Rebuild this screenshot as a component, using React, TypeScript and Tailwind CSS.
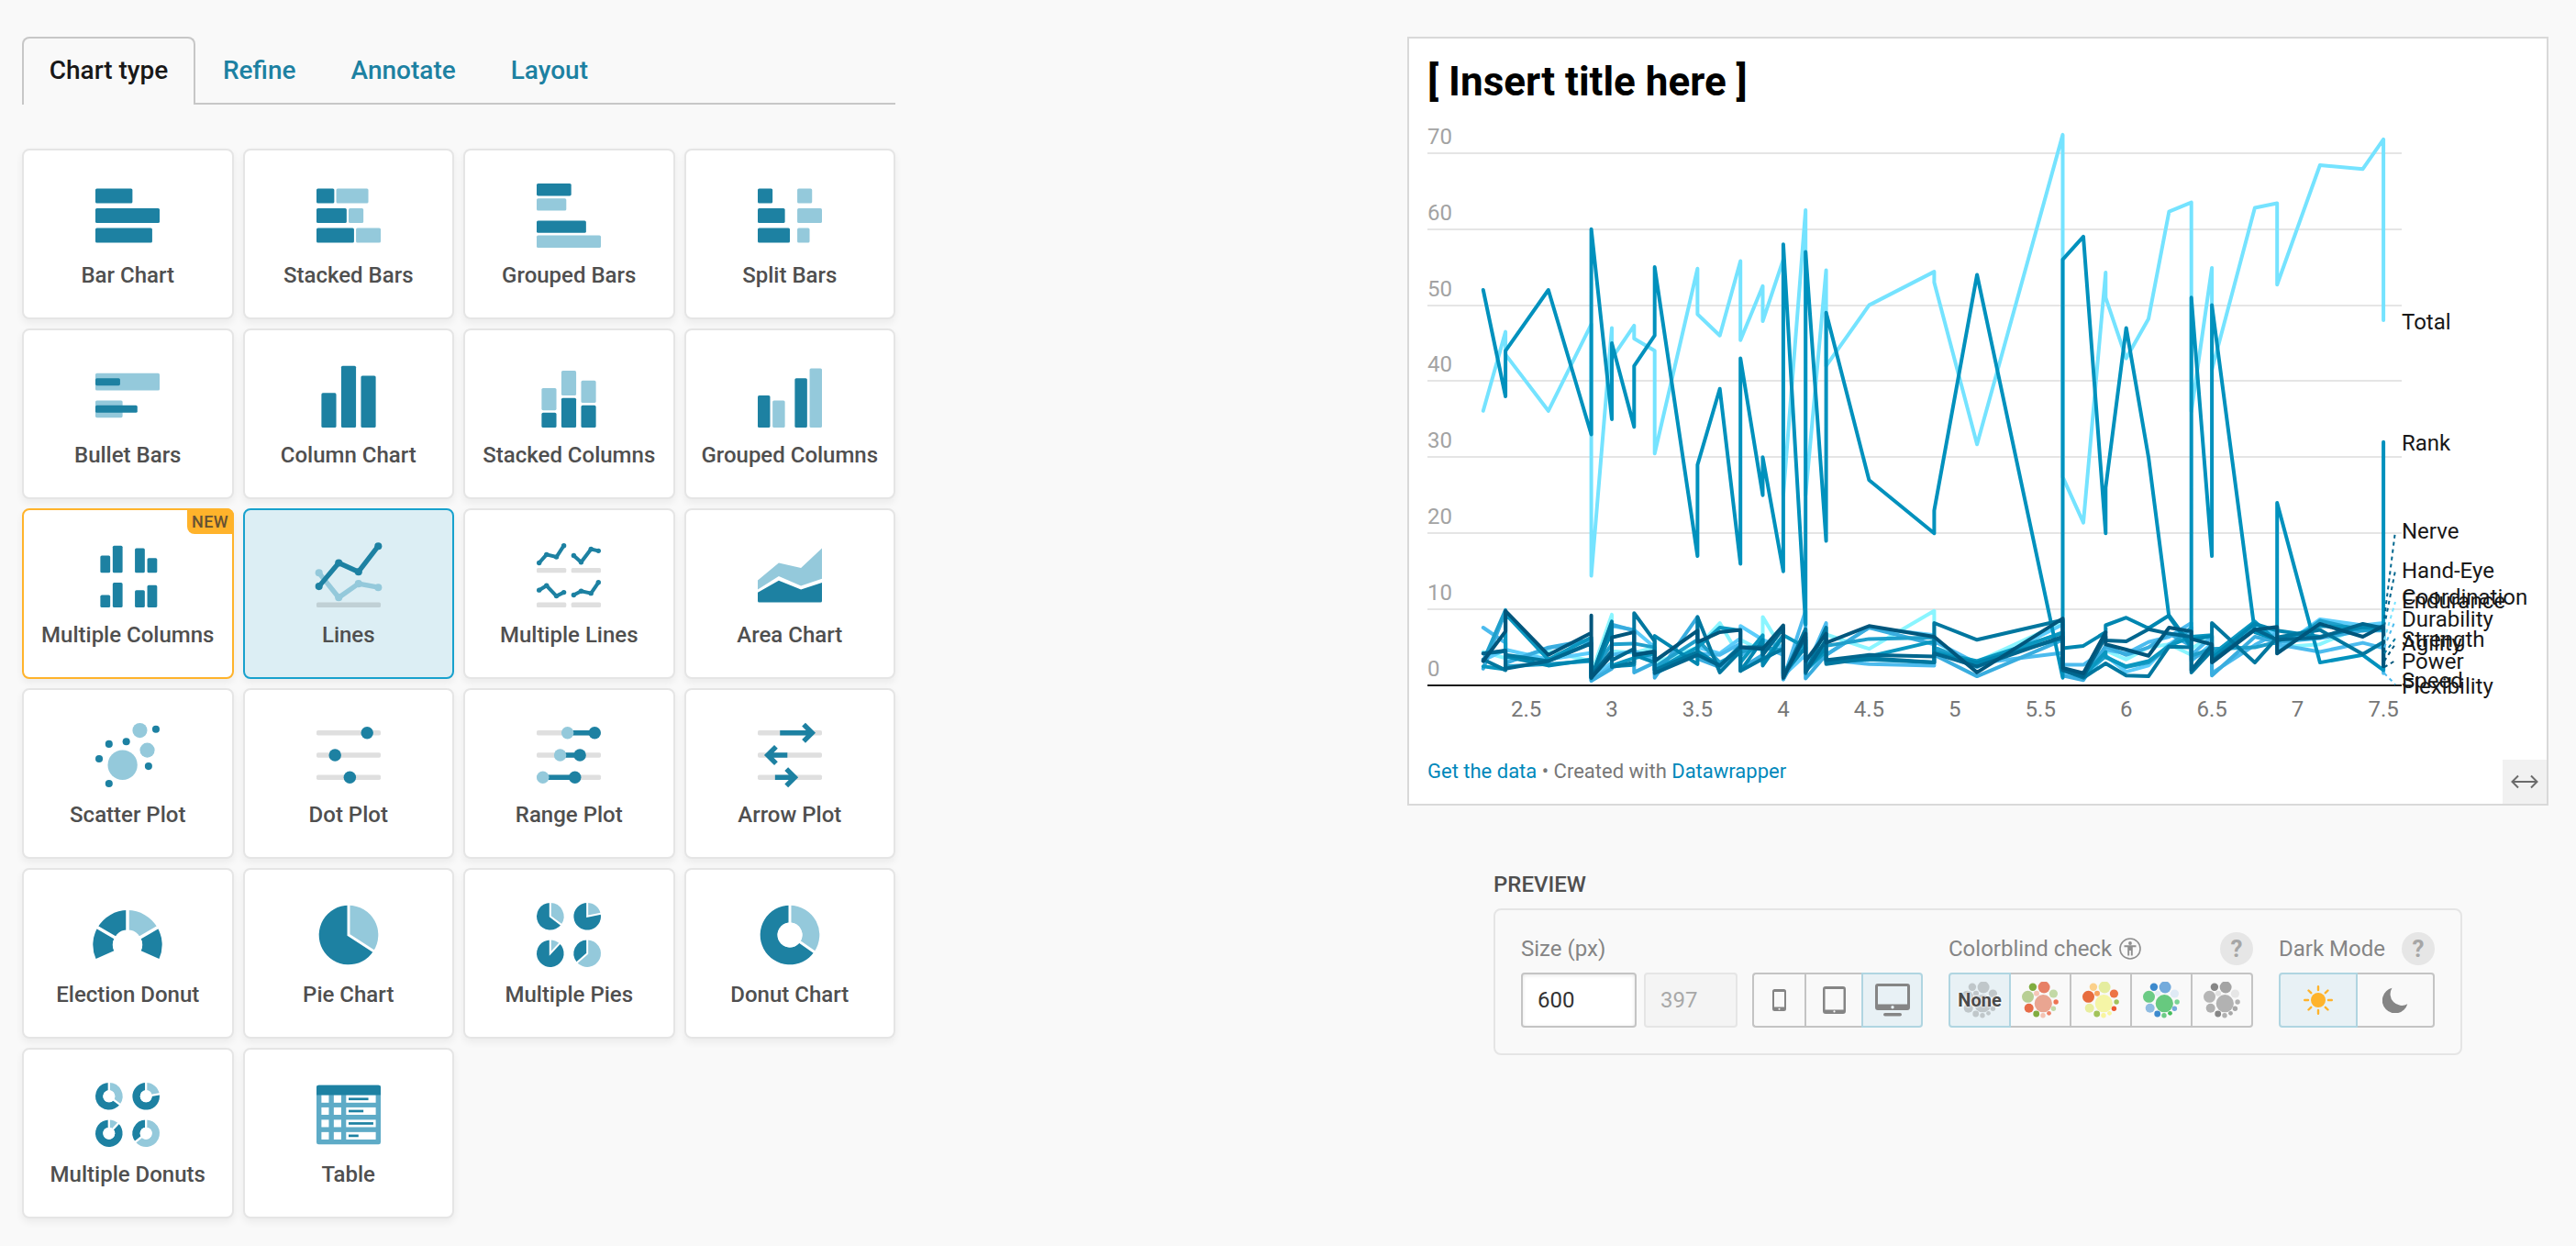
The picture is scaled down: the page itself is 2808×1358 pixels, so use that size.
import React from "react";

const D = "#1d81a2";
const L = "#94c9db";
const G = "rgba(0,0,0,0.125)";

type Bar = [number, number, number, number, string];

const Bars = ({ items }: { items: Bar[] }) => (
  <>
    {items.map(([x, y, w, h, fill], i) => (
      <rect key={i} x={x} y={y} width={w} height={h} rx={0.6} fill={fill} />
    ))}
  </>
);

const polar = (cx: number, cy: number, r: number, deg: number) => {
  const a = ((deg - 90) * Math.PI) / 180;
  return [cx + r * Math.cos(a), cy + r * Math.sin(a)];
};

const slicePath = (cx: number, cy: number, r: number, inner: number, a0: number, a1: number) => {
  const large = a1 - a0 > 180 ? 1 : 0;
  const [x0, y0] = polar(cx, cy, r, a0);
  const [x1, y1] = polar(cx, cy, r, a1);
  const [x2, y2] = polar(cx, cy, inner, a1);
  const [x3, y3] = polar(cx, cy, inner, a0);
  return `M${x0} ${y0}A${r} ${r} 0 ${large} 1 ${x1} ${y1}L${x2} ${y2}A${inner} ${inner} 0 ${large} 0 ${x3} ${y3}Z`;
};

interface PieProps {
  cx: number;
  cy: number;
  r: number;
  inner?: number;
  split: number;
  gap?: number;
}

const Pie = ({ cx, cy, r, inner = 0.01, split, gap = 1.1 }: PieProps) => {
  const [sx, sy] = polar(cx, cy, r + 1, split);
  return (
    <g>
      <path d={slicePath(cx, cy, r, inner, 0, split)} fill={L} />
      <path d={slicePath(cx, cy, r, inner, split, 360)} fill={D} />
      <path d={`M${cx} ${cy - r - 1}V${cy}L${sx} ${sy}`} fill="none" stroke="#fff" strokeWidth={gap} />
      {inner > 1 && <circle cx={cx} cy={cy} r={inner} fill="#fff" />}
    </g>
  );
};

const Spark = ({ pts, color, w, r }: { pts: number[][]; color: string; w: number; r: number }) => (
  <g>
    <polyline points={pts.map((p) => p.join(",")).join(" ")} fill="none" stroke={color} strokeWidth={w} strokeLinejoin="round" />
    {pts.map(([x, y], i) => (
      <circle key={i} cx={x} cy={y} r={r} fill={color} />
    ))}
  </g>
);

const Dots = ({ items }: { items: [number, number, number, string][] }) => (
  <>
    {items.map(([x, y, r, fill], i) => (
      <circle key={i} cx={x} cy={y} r={r} fill={fill} />
    ))}
  </>
);

const tracks: Bar[] = [
  [0, 3, 26, 2, G],
  [0, 12, 26, 2, G],
  [0, 21, 26, 2, G],
];

const chartTypes: { name: string; icon: React.ReactNode; state?: "new" | "active" }[] = [
  { name: "Bar Chart", icon: <Bars items={[[0, 2, 15, 6, D], [0, 10, 26, 6, D], [0, 18, 23, 6, D]]} /> },
  {
    name: "Stacked Bars",
    icon: (
      <Bars items={[[0, 2, 7.2, 6, D], [8, 2, 13, 6, L], [0, 10, 12.2, 6, D], [13, 10, 6, 6, L], [0, 18, 15.2, 6, D], [16, 18, 10, 6, L]]} />
    ),
  },
  { name: "Grouped Bars", icon: <Bars items={[[0, 0, 14, 5, D], [0, 6, 12, 5, L], [0, 15, 20, 5, D], [0, 21, 26, 5, L]]} /> },
  {
    name: "Split Bars",
    icon: <Bars items={[[0, 2, 6, 6, D], [16, 2, 6, 6, L], [0, 10, 11, 6, D], [16, 10, 10, 6, L], [0, 18, 13, 6, D], [16, 18, 5, 6, L]]} />,
  },
  { name: "Bullet Bars", icon: <Bars items={[[0, 4, 26, 7, L], [0, 6, 10, 3, D], [0, 15, 11, 7, L], [0, 17, 17, 3, D]]} /> },
  { name: "Column Chart", icon: <Bars items={[[2, 12, 6, 14, D], [10, 1, 6, 25, D], [18, 5, 6, 21, D]]} /> },
  {
    name: "Stacked Columns",
    icon: (
      <Bars items={[[2, 10, 6, 9, L], [2, 20, 6, 6, D], [10, 3, 6, 10, L], [10, 14, 6, 12, D], [18, 7, 6, 9, L], [18, 17, 6, 9, D]]} />
    ),
  },
  { name: "Grouped Columns", icon: <Bars items={[[0, 13, 5, 13, D], [6, 15, 5, 11, L], [15, 6, 5, 20, D], [21, 2, 5, 24, L]]} /> },
  {
    name: "Multiple Columns",
    state: "new",
    icon: (
      <Bars
        items={[
          [2, 5, 4, 7, D], [7, 1, 4, 11, D], [16, 2, 4, 10, D], [21, 6, 4, 6, D],
          [2, 21, 4, 5, D], [7, 16, 4, 10, D], [16, 19, 4, 7, D], [21, 17, 4, 9, D],
        ]}
      />
    ),
  },
  {
    name: "Lines",
    state: "active",
    icon: (
      <>
        <Spark pts={[[1, 12], [9, 22], [17, 16.4], [25, 17.9]]} color={L} w={2} r={1.5} />
        <Spark pts={[[1, 17.5], [9, 8], [17, 11.6], [25, 1.2]]} color={D} w={2} r={1.5} />
        <rect x={0} y={24} width={26} height={2} rx={0.6} fill={G} />
      </>
    ),
  },
  {
    name: "Multiple Lines",
    icon: (
      <>
        <Spark pts={[[1, 8], [4, 4.6], [8, 5.6], [11, 1]]} color={D} w={1.5} r={1} />
        <Spark pts={[[15, 5], [18, 7.7], [22, 2.4], [25, 3.1]]} color={D} w={1.5} r={1} />
        <Spark pts={[[1, 19], [4, 17.2], [8, 21.4], [11, 19.9]]} color={D} w={1.5} r={1} />
        <Spark pts={[[15, 21], [18, 19.4], [22, 20.3], [25, 15.9]]} color={D} w={1.5} r={1} />
        <Bars items={[[0, 10, 12, 2, G], [14, 10, 12, 2, G], [0, 24, 12, 2, G], [14, 24, 12, 2, G]]} />
      </>
    ),
  },
  {
    name: "Area Chart",
    icon: (
      <>
        <path d="M0 15L8.5 8L17.5 10L26 2V14.4L17.5 17.3L8.5 13.4L0 18.8Z" fill={L} />
        <path d="M0 20L8.5 15.1L17.5 18.8L26 16V23.4a.6.6 0 0 1-.6.6H.6a.6.6 0 0 1-.6-.6Z" fill={D} />
      </>
    ),
  },
  {
    name: "Scatter Plot",
    icon: (
      <Dots
        items={[
          [18, 3, 3, L], [21, 11, 3, L], [11, 17, 6, L], [24.5, 2.5, 1.5, D], [12.5, 7.5, 1.5, D],
          [5.5, 8.5, 1.5, D], [1.5, 14.5, 1.5, D], [21.5, 17.5, 1.5, D], [5.5, 24.5, 1.5, D],
        ]}
      />
    ),
  },
  {
    name: "Dot Plot",
    icon: (
      <>
        <Bars items={tracks} />
        <Dots items={[[20.5, 4, 2.5, D], [7.5, 13, 2.5, D], [13.5, 22, 2.5, D]]} />
      </>
    ),
  },
  {
    name: "Range Plot",
    icon: (
      <>
        <Bars items={tracks} />
        <Bars items={[[12.5, 3, 11, 2, D], [9.5, 12, 8, 2, D], [2.5, 21, 13, 2, D]]} />
        <Dots items={[[12.5, 4, 2.5, L], [23.5, 4, 2.5, D], [9.5, 13, 2.5, L], [17.5, 13, 2.5, D], [2.5, 22, 2.5, L], [15.5, 22, 2.5, D]]} />
      </>
    ),
  },
  {
    name: "Arrow Plot",
    icon: (
      <>
        <Bars items={tracks} />
        <path
          d="M9 4H22M18.6 .6L22 4L18.6 7.4M12 13H4.2M7.4 9.6L4 13L7.4 16.4M7 22H15M11.6 18.6L15 22L11.6 25.4"
          fill="none"
          stroke={D}
          strokeWidth={2}
        />
      </>
    ),
  },
  {
    name: "Election Donut",
    icon: (
      <>
        <path d={slicePath(13, 17, 14, 6, -114, -60)} fill={D} />
        <path d={slicePath(13, 17, 14, 6, -60, 0)} fill={D} />
        <path d={slicePath(13, 17, 14, 6, 0, 60)} fill={L} />
        <path d={slicePath(13, 17, 14, 6, 60, 114)} fill={D} />
        <path d="M13 2V13M13 17L.2 9.6M13 17L25.8 9.6" stroke="#fff" strokeWidth={1.3} />
        <circle cx={13} cy={17} r={5.9} fill="#fff" />
      </>
    ),
  },
  { name: "Pie Chart", icon: <Pie cx={13} cy={13} r={12} split={123} /> },
  {
    name: "Multiple Pies",
    icon: (
      <>
        <Pie cx={5.5} cy={5.5} r={5.5} split={127} gap={0.75} />
        <Pie cx={20.5} cy={5.5} r={5.5} split={78} gap={0.75} />
        <Pie cx={5.5} cy={20.5} r={5.5} split={43} gap={0.75} />
        <Pie cx={20.5} cy={20.5} r={5.5} split={229} gap={0.75} />
      </>
    ),
  },
  { name: "Donut Chart", icon: <Pie cx={13} cy={13} r={12} inner={5} split={125} /> },
  {
    name: "Multiple Donuts",
    icon: (
      <>
        <Pie cx={5.5} cy={5.5} r={5.5} inner={2.4} split={127} gap={0.85} />
        <Pie cx={20.5} cy={5.5} r={5.5} inner={2.4} split={80} gap={0.85} />
        <Pie cx={5.5} cy={20.5} r={5.5} inner={2.4} split={43} gap={0.85} />
        <Pie cx={20.5} cy={20.5} r={5.5} inner={2.4} split={231} gap={0.85} />
      </>
    ),
  },
  {
    name: "Table",
    icon: (
      <>
        <rect x={0} y={1} width={26} height={24} rx={0.9} fill="#5eabc7" />
        <path d="M0 5V1.9A.9.9 0 0 1 .9 1H25.1a.9.9 0 0 1 .9.9V5Z" fill={D} />
        {[5.1, 10, 15, 20].map((y, i) => (
          <g key={y}>
            <rect x={2} y={y} width={3} height={3} fill="#fff" />
            <rect x={7} y={y} width={3} height={3} fill="#fff" />
            <rect x={12} y={y} width={12} height={3} fill="#fff" />
            <rect x={13} y={y + 1} width={[8, 6, 10, 4][i]} height={1} fill={D} />
          </g>
        ))}
      </>
    ),
  },
];

const ChartCard = ({ name, icon, state }: { name: string; icon: React.ReactNode; state?: string }) => {
  const look =
    state === "new"
      ? "border-[#ffb32b] bg-white"
      : state === "active"
        ? "border-[#18a1cd] bg-[#dceef4]"
        : "border-[#e5e5e5] bg-white";
  return (
    <div className={`relative flex h-[186px] flex-col items-center rounded-lg border-2 pt-9 shadow-[0_4px_8px_rgba(0,0,0,0.06)] ${look}`}>
      {state === "new" && (
        <span className="absolute -top-0.5 -right-0.5 flex h-7 w-[51px] items-center justify-center rounded-tr-lg rounded-bl-lg bg-[#ffb32b] text-[18px] font-medium tracking-[0.4px] text-[#665133]">
          NEW
        </span>
      )}
      <svg className="size-[70px] shrink-0 overflow-visible" viewBox="0 0 26 26">
        {icon}
      </svg>
      <span className="mt-[15px] text-2xl leading-[30px] font-medium whitespace-nowrap text-[#4f4f4f]">{name}</span>
    </div>
  );
};

/* ---------- line chart ---------- */

const px = (v: number) => 201 + (v - 3) * 186.9;
const py = (v: number) => 622 - v * 8.289;
const toPoints = (s: string) =>
  s
    .trim()
    .split(/\s*,\s*/)
    .map((p) => {
      const [x, y] = p.split(" ").map(Number);
      return `${px(x).toFixed(1)},${py(y).toFixed(1)}`;
    })
    .join(" ");

const series: { color: string; data: string }[] = [
  {
    color: "#8af5ff",
    data: "2.25 4.4,2.38 3.6,2.63 4.5,2.88 3.2,2.88 1.5,3 9.3,3 4.5,3.13 4.3,3.25 5,3.25 3,3.5 5,3.63 8.2,3.75 3.6,3.75 6,3.88 4.5,3.88 9,4 4.5,4 1.2,4.13 7,4.13 2.5,4.25 6.7,4.5 4.8,4.88 9.8,4.88 5,5.13 3.1,5.63 8.3,5.63 1.2,5.75 1.3,5.88 4.6,6 3.4,6.13 5,6.25 5.4,6.38 4,6.38 4.8,6.5 6.6,6.5 4,6.75 7.8,6.88 6.6,6.88 5,7.13 5.4,7.38 7.8,7.5 7.5,7.5 5",
  },
  {
    color: "#5ccdfb",
    data: "2.25 3.3,2.38 4.7,2.63 3.4,2.88 4.3,2.88 1,3 3,3 7.8,3.13 7.3,3.25 5,3.25 1.4,3.5 5,3.63 4.2,3.75 6.2,3.75 7.8,3.88 6,4 5,4 1.3,4.13 4,4.13 2,4.25 4,4.5 7.6,4.88 6.6,4.88 4.5,5.13 2.4,5.63 8,5.63 1.6,5.75 1,5.88 3.9,6 1.8,6.13 2.6,6.25 5.4,6.38 7.2,6.38 3.2,6.5 5.5,6.5 3,6.75 7.5,6.88 6.9,6.88 4.6,7.13 8.7,7.38 7.9,7.5 8.2,7.5 3.4",
  },
  {
    color: "#4cbbee",
    data: "2.25 7.6,2.38 5.6,2.38 3,2.63 4.9,2.88 5.8,2.88 .6,3 2.6,3 4,3.13 4.5,3.25 3.4,3.25 2,3.5 4.2,3.63 4,3.75 5.5,3.75 4,3.88 5.2,4 4,4 .8,4.13 9.8,4.13 2,4.25 8.2,4.25 3.4,4.5 2.8,4.88 2.6,4.88 5.8,5.13 2.9,5.63 4.3,5.63 2.7,5.75 2.7,5.88 4.7,6 4.2,6.13 5.7,6.25 6.4,6.38 8.2,6.38 4,6.5 6.4,6.5 1.6,6.75 5.3,6.88 6.9,6.88 5.4,7.13 4.4,7.38 5.6,7.5 4.9,7.5 1.6",
  },
  {
    color: "#39addf",
    data: "2.25 2.2,2.38 9.7,2.38 2.9,2.63 5,2.88 6,2.88 .6,3 2.2,3 8,3.13 7.2,3.13 1.7,3.25 3,3.25 1,3.5 9,3.5 3.5,3.63 2.4,3.75 5,3.75 2.2,3.88 4,3.88 3.3,4 5,4 .8,4.13 6,4.13 .9,4.25 4,4.5 7.6,4.88 5.4,4.88 4,5.13 1.2,5.63 6,5.63 1.3,5.75 .7,5.88 5.2,6 4,6.13 5,6.25 6.8,6.38 5.2,6.38 3.4,6.5 5,6.5 1.3,6.75 6.4,6.88 5.7,7.13 6.2,7.38 7.2,7.5 7.2",
  },
  {
    color: "#1f9fcb",
    data: "2.25 3.2,2.38 9.9,2.38 2.5,2.63 2.8,2.88 3.2,2.88 1.6,3 5.4,3.13 5.5,3.25 5,3.25 2.4,3.5 6,3.63 3,3.75 4.4,3.88 5,4 4.6,4 1.6,4.13 6,4.13 2.4,4.25 5.2,4.5 6.1,4.88 6.3,4.88 5,5.13 2.7,5.63 7,5.63 2,5.75 1.6,5.88 3.8,6 2.4,6.13 3,6.25 5.1,6.38 7.6,6.38 3.9,6.5 4.8,6.75 5,6.88 5.7,6.88 4.2,7.13 8.5,7.38 7.2,7.5 7.8",
  },
  {
    color: "#0a97c0",
    data: "2.25 2.5,2.38 2.1,2.38 9.4,2.63 3.4,2.88 6.3,2.88 .9,3 8.2,3 2.6,3.13 3.6,3.25 4.2,3.25 2,3.5 5,3.63 7.6,3.75 7.2,3.75 3,3.88 6.6,3.88 3,4 6.6,4.13 5,4.13 7,4.13 2,4.25 4.5,4.25 3.2,4.5 3.8,4.88 5.8,4.88 4.4,5.13 3.2,5.63 6.9,5.63 2.2,5.75 1.2,5.88 4.4,5.88 3.7,6 2.5,6.13 3.2,6.25 5.2,6.38 6.4,6.5 6.6,6.5 4,6.75 8.4,6.88 5.8,7.13 7.8,7.38 7.6,7.5 7.3",
  },
  {
    color: "#75e3ff",
    data: "2.25 36.1,2.38 46.5,2.38 43.5,2.63 36.1,2.88 47.5,2.88 14.4,3 47,3 43,3.13 47.3,3.13 45.6,3.25 44,3.25 30.5,3.5 54.8,3.5 48.8,3.63 46,3.75 55.8,3.75 45.4,3.88 52.5,3.88 47.9,4 56,4 25,4.13 62.5,4.13 25,4.25 54.6,4.25 42,4.5 50,4.88 54.4,4.88 53,5.13 31.7,5.63 72.4,5.63 27.4,5.75 21.4,5.88 54.3,5.88 51,6 43,6.13 48.2,6.25 62.3,6.38 63.5,6.38 36,6.5 54.9,6.5 41.5,6.75 62.8,6.88 63.4,6.88 52.7,7.13 68.4,7.38 67.9,7.5 71.8,7.5 48",
  },
  {
    color: "#0091bd",
    data: "2.25 52,2.38 38,2.38 44,2.63 52,2.88 33,2.88 60,3 35,3 45,3.13 34,3.13 42,3.25 46,3.25 55,3.5 17,3.5 29,3.63 39,3.75 16,3.75 43,3.88 25,3.88 30,4 15,4 58,4.13 8,4.13 57,4.25 19,4.25 49,4.5 27,4.88 20,4.88 23,5.13 54,5.63 1,5.63 56,5.75 59,5.88 20,5.88 26,6 47,6.13 30,6.25 9,6.38 5,6.38 51,6.5 17,6.5 50,6.75 7,6.88 6,6.88 24,7.13 3,7.38 4,7.5 2,7.5 32",
  },
  {
    color: "#0086b0",
    data: "2.25 4.2,2.38 4.5,2.38 3.8,2.63 2.6,2.88 3.4,2.88 1,3 7,3 2.5,3.13 2.7,3.13 4,3.25 3,3.25 6.5,3.5 2.8,3.5 4.5,3.63 2.6,3.75 5.2,3.75 1.9,3.88 6,3.88 2.6,4 6.5,4 1.5,4.13 5,4.13 2,4.25 5,4.25 3,4.5 3.4,4.88 3,4.88 4.2,5.13 3,5.63 6.2,5.63 4.9,5.75 5.2,5.88 7,5.88 7.9,6 8.9,6.13 7.5,6.25 9.2,6.38 5.2,6.38 6,6.5 6.5,6.5 3.6,6.75 8.1,6.88 7.2,7.13 6.4,7.38 7.7,7.5 7.6",
  },
  {
    color: "#00779f",
    data: "2.25 3.4,2.38 2,2.38 4,2.63 3.2,2.88 5.6,2.88 1,3 8.4,3 2.4,3.13 3,3.13 9.5,3.25 5.8,3.25 2,3.5 4.4,3.5 9,3.63 1.7,3.75 4.5,3.75 1.9,3.88 3.5,4 4.8,4 1,4.13 7.4,4.13 1.6,4.25 7.6,4.25 2.8,4.5 3.6,4.88 3,4.88 8.2,5.13 6,5.63 8.6,5.63 2,5.75 1,5.88 2.9,6 1.3,6.13 1.2,6.25 5.1,6.38 5,6.38 1.7,6.5 4.6,6.5 8.2,6.75 3,6.88 6.3,7.13 7.3,7.38 4.1,7.5 5.7",
  },
  {
    color: "#00668e",
    data: "2.25 4.2,2.38 4.6,2.38 2.2,2.63 3.2,2.88 5.5,2.88 1.2,3 4.5,3 3.3,3.13 4.8,3.13 4,3.25 4.5,3.25 1.6,3.5 4,3.63 2.6,3.75 5,3.88 5,3.88 4,4 7.5,4 1.2,4.13 6.4,4.13 1.8,4.25 6,4.25 3.3,4.5 4,4.88 3.8,4.88 4.2,5.13 2.5,5.63 6.4,5.63 2,5.75 1.2,5.88 6.4,5.88 5.9,6 5.8,6.13 7.4,6.25 6.8,6.38 6.4,6.38 2,6.5 5.3,6.5 3.2,6.75 7.4,6.88 6,7.13 6.3,7.38 8.1,7.5 7.5,7.5 3",
  },
  {
    color: "#00567c",
    data: "2.25 3.2,2.38 7.1,2.38 9.8,2.63 4,2.88 6.9,2.88 9.2,2.88 1,3 4,3 6.3,3.13 7,3.13 4,3.25 4.4,3.25 3.2,3.5 7.2,3.5 5.7,3.63 7,3.75 7.3,3.75 5,3.88 4.8,4 7.9,4 1,4.13 6.8,4.13 3.2,4.25 6.8,4.25 5.6,4.5 7.8,4.88 6.4,5.13 1.7,5.63 8.8,5.63 2.3,5.75 1.6,5.88 7,5.88 5.4,6 4.7,6.13 3.9,6.25 7.6,6.38 7.1,6.38 6.1,6.5 5.4,6.5 3,6.75 7.3,6.88 7.7,6.88 4.2,7.13 8.1,7.38 6.4,7.5 7.8,7.5 2.5",
  },
];

const lineLabels: [string, number][] = [
  ["Total", 358.5],
  ["Rank", 490.5],
  ["Nerve", 586.5],
  ["Hand-Eye", 630],
  ["Coordination", 659],
  ["Endurance", 662.5],
  ["Durability", 682.5],
  ["Strength", 705],
  ["Agility", 708.5],
  ["Power", 728.5],
  ["Speed", 750],
  ["Flexibility", 755.5],
];

const leaders: [number, number, string][] = [
  [8.8, 454, "#00668e"],
  [7.8, 497, "#00668e"],
  [6, 531, "#75e3ff"],
  [5, 551, "#4cbbee"],
  [4.2, 571, "#00779f"],
  [3.2, 577, "#00567c"],
  [2.4, 595, "#00567c"],
  [1.6, 621, "#4cbbee"],
];

const LineChart = () => (
  <svg className="block h-[680px] w-[1220px] shrink-0" viewBox="0 0 1220 680" fontSize="24">
    {[10, 20, 30, 40, 50, 60, 70].map((v) => (
      <line key={v} x1={0} x2={1062} y1={Math.round(py(v))} y2={Math.round(py(v))} stroke="#e5e5e5" strokeWidth={2} />
    ))}
    {[0, 10, 20, 30, 40, 50, 60, 70].map((v) => (
      <text key={v} x={0} y={py(v) - 10} fill="#a3a3a3">
        {v}
      </text>
    ))}
    {[2.5, 3, 3.5, 4, 4.5, 5, 5.5, 6, 6.5, 7, 7.5].map((v) => (
      <text key={v} x={px(v)} y={656} textAnchor="middle" fill="#777777">
        {v}
      </text>
    ))}
    <line x1={0} x2={1062} y1={622} y2={622} stroke="#181818" strokeWidth={2} />
    {series.map((s) => (
      <polyline
        key={s.color}
        points={toPoints(s.data)}
        fill="none"
        stroke={s.color}
        strokeWidth={4}
        strokeLinecap="round"
        strokeLinejoin="round"
      />
    ))}
    {leaders.map(([v, y, color], i) => (
      <line key={i} x1={1043} y1={py(v)} x2={1055} y2={y} stroke={color} strokeWidth={2} strokeDasharray="4 4" />
    ))}
    {lineLabels.map(([label, y]) => (
      <text key={label} x={1062} y={y - 125} fill="#181818">
        {label}
      </text>
    ))}
  </svg>
);

/* ---------- preview controls ---------- */

const blob: [number, number, number][] = [
  [23.3, 23.7, 9.6],
  [24.1, 6, 6.5],
  [11.9, 5.7, 4.2],
  [6.5, 16.3, 6.5],
  [34.4, 13, 4.6],
  [16, 12.7, 3],
  [37.1, 22, 2.7],
  [7.7, 28.7, 5],
  [15.7, 35, 3.4],
  [23, 36.7, 2.7],
  [29.5, 34.3, 2.4],
  [34.4, 29.3, 2.7],
];

const palettes = [
  ["#e9a591", "#e78066", "#80ac40", "#b8cf94", "#c3d9a6", "#f6c6b7", "#ee7352", "#e76c47", "#80ac40", "#f4c3b3", "#ef8368", "#c3d9a6"],
  ["#f5f5a6", "#e5ed9f", "#fbd08b", "#e76c3e", "#ed7445", "#f8a55f", "#a2c35a", "#e9ee9f", "#a2c35a", "#f9f59e", "#f9f59e", "#ee5a30"],
  ["#67c97f", "#74abdc", "#3d8acd", "#6ccb85", "#dfeaf5", "#e5eef5", "#79d494", "#8fbce2", "#3d8acd", "#6ccb85", "#44bd5c", "#74abdc"],
  ["#b2b2b2", "#a4a4a4", "#868686", "#b6b6b6", "#e6e6e6", "#e2e2e2", "#b2b2b2", "#b0b0b0", "#868686", "#b0b0b0", "#a8a8a8", "#a8a8a8"],
];

const Blob = ({ colors }: { colors: string[] }) => (
  <svg className="size-10" viewBox="0 0 40 40">
    {blob.map(([x, y, r], i) => (
      <circle key={i} cx={x} cy={y} r={r} fill={colors[i % colors.length]} />
    ))}
  </svg>
);

const Help = () => (
  <span className="flex size-9 items-center justify-center rounded-full bg-[#e6e6e6] text-[26px] leading-9 font-bold text-[#a6a6a6]">?</span>
);

const activeSeg = "border-[#b0d5e1] bg-[#e8f1f5]";
const idleSeg = "border-[#c4c4c4]";

const PreviewPanel = () => (
  <section className="ml-[94px] w-[1056px]">
    <h2 className="text-2xl leading-[30px] font-medium text-[#4f4f4f]">PREVIEW</h2>
    <div className="mt-[11px] flex h-40 rounded-lg border-2 border-[#e5e5e5] pt-6 pl-7 text-2xl text-[#858585]">
      <div className="w-[438px]">
        <div className="flex h-9 items-center">Size (px)</div>
        <div className="mt-2 flex">
          <div className="flex h-[60px] w-[126px] items-center rounded border-2 border-[#c4c4c4] bg-white pl-4 text-[#333333] shadow-[inset_0_1px_4px_rgba(0,0,0,0.1)]">
            600
          </div>
          <div className="ml-2 flex h-[60px] w-[102px] items-center rounded border-2 border-[#e5e5e5] bg-[#f4f4f4] pl-4 text-[#a8a8a8]">397</div>
          <div className="ml-4 flex h-[60px]">
            <div className={`flex w-[57px] items-center justify-center rounded-l border-2 border-r-0 ${idleSeg}`}>
              <svg className="h-6 w-[15px]" viewBox="0 0 15 24">
                <path fillRule="evenodd" fill="#858585" d="M2.5 0h10A2.5 2.5 0 0 1 15 2.5v19a2.5 2.5 0 0 1-2.5 2.5h-10A2.5 2.5 0 0 1 0 21.5v-19A2.5 2.5 0 0 1 2.5 0ZM2 3v16.5h11V3ZM7.5 20.7a1 1 0 1 0 0 2a1 1 0 0 0 0-2Z" />
              </svg>
            </div>
            <div className={`flex w-[62px] items-center justify-center border-2 border-r-0 ${idleSeg}`}>
              <svg className="h-[30px] w-[25px]" viewBox="0 0 25 30">
                <path fillRule="evenodd" fill="#858585" d="M3 0h19a3 3 0 0 1 3 3v24a3 3 0 0 1-3 3H3a3 3 0 0 1-3-3V3a3 3 0 0 1 3-3ZM2.5 3v22.5h20V3ZM12.5 26.3a1.1 1.1 0 1 0 0 2.2a1.1 1.1 0 0 0 0-2.2Z" />
              </svg>
            </div>
            <div className={`flex w-[67px] items-center justify-center rounded-r border-2 ${activeSeg}`}>
              <svg className="h-9 w-[38px]" viewBox="0 0 38 36">
                <path fillRule="evenodd" fill="#858585" d="M3 0h32a3 3 0 0 1 3 3v23a3 3 0 0 1-3 3H3a3 3 0 0 1-3-3V3a3 3 0 0 1 3-3ZM3 3v19.5h32V3ZM19 24a1.7 1.7 0 1 0 0 3.4a1.7 1.7 0 0 0 0-3.4Z" />
                <rect x={9} y={32} width={20} height={3.6} rx={1.8} fill="#858585" />
              </svg>
            </div>
          </div>
        </div>
      </div>
      <div className="ml-7 w-[332px]">
        <div className="flex h-9 items-center">
          Colorblind check
          <svg className="ml-2 size-6" viewBox="0 0 24 24">
            <circle cx={12} cy={12} r={11} fill="none" stroke="#8f8f8f" strokeWidth={1.6} />
            <circle cx={12} cy={6} r={1.9} fill="#8f8f8f" />
            <path d="M5.5 9.2H18.5M12 9V14M10.2 9V19.5M13.8 9V19.5" stroke="#8f8f8f" strokeWidth={1.9} />
          </svg>
          <div className="ml-auto">
            <Help />
          </div>
        </div>
        <div className="mt-2 flex h-[60px]">
          <div className={`relative flex w-[68px] items-center justify-center rounded-l border-2 ${activeSeg}`}>
            <Blob colors={["#c0c7ca"]} />
            <span className="absolute inset-0 flex items-center justify-center text-xl font-bold text-[#4a4a4a] [text-shadow:0_0_3px_#fff,0_0_3px_#fff]">
              None
            </span>
          </div>
          {palettes.map((p, i) => (
            <div key={i} className={`flex w-[66px] items-center justify-center border-2 border-l-0 last:rounded-r ${idleSeg}`}>
              <Blob colors={p} />
            </div>
          ))}
        </div>
      </div>
      <div className="ml-7 w-[170px]">
        <div className="flex h-9 items-center justify-between">
          Dark Mode
          <Help />
        </div>
        <div className="mt-2 flex h-[60px]">
          <div className={`flex w-[86px] items-center justify-center rounded-l border-2 ${activeSeg}`}>
            <svg className="size-8" viewBox="0 0 32 32">
              <circle cx={16} cy={16} r={8} fill="#ffb32b" />
              <path
                d="M16 1.2V5M16 27V30.8M1.2 16H5M27 16H30.8M5.5 5.5L8.2 8.2M23.8 23.8L26.5 26.5M5.5 26.5L8.2 23.8M23.8 8.2L26.5 5.5"
                stroke="#ffb32b"
                strokeWidth={2.4}
                strokeLinecap="round"
              />
            </svg>
          </div>
          <div className={`flex w-[84px] items-center justify-center rounded-r border-2 border-l-0 ${idleSeg}`}>
            <svg className="size-7" viewBox="0 0 28 28">
              <path d="M10.5 .8A14 14 0 1 0 27.3 18.3A12.5 12.5 0 0 1 10.5 .8Z" fill="#858585" />
            </svg>
          </div>
        </div>
      </div>
    </div>
  </section>
);

export default function App() {
  return (
    <main className="flex h-[1358px] w-[2808px] overflow-hidden bg-[#f9f9f9] pt-10 pl-6 font-[Roboto,sans-serif]">
      <section className="w-[952px] shrink-0">
        <nav className="flex h-[74px] text-[28px] font-medium text-[#1d81a2]">
          <span className="flex w-[189px] items-center justify-center rounded-t-lg border-2 border-b-0 border-[#c7c7c7] pb-[3px] text-[#181818]">
            Chart type
          </span>
          <div className="flex flex-1 items-center gap-[60px] border-b-2 border-[#c7c7c7] pt-px pl-[30px]">
            <span>Refine</span>
            <span>Annotate</span>
            <span>Layout</span>
          </div>
        </nav>
        <div className="mt-12 grid grid-cols-4 gap-[10px]">
          {chartTypes.map((c) => (
            <ChartCard key={c.name} {...c} />
          ))}
        </div>
      </section>
      <section className="ml-[558px] w-[1244px] shrink-0">
        <figure className="relative flex h-[838px] flex-col border-2 border-[#d9d9d9] bg-white pl-5">
          <h1 className="mt-[19px] h-[64px] text-[44px] leading-[56px] font-bold text-black">[ Insert title here ]</h1>
          <LineChart />
          <figcaption className="mt-5 text-[22px] leading-8 text-[#777777]">
            <span className="text-[#0088bb]">Get the data</span> • Created with <span className="text-[#0088bb]">Datawrapper</span>
          </figcaption>
          <div className="absolute right-0 bottom-0 flex size-12 items-center justify-center bg-[#f1f1f1]">
            <svg className="h-4 w-[30px]" viewBox="0 0 30 16" fill="none" stroke="#6b6b6b" strokeWidth={2}>
              <path d="M1.5 8H28.5M8 1.5L1.5 8L8 14.5M22 1.5L28.5 8L22 14.5" />
            </svg>
          </div>
        </figure>
        <div className="mt-[71px]">
          <PreviewPanel />
        </div>
      </section>
    </main>
  );
}
